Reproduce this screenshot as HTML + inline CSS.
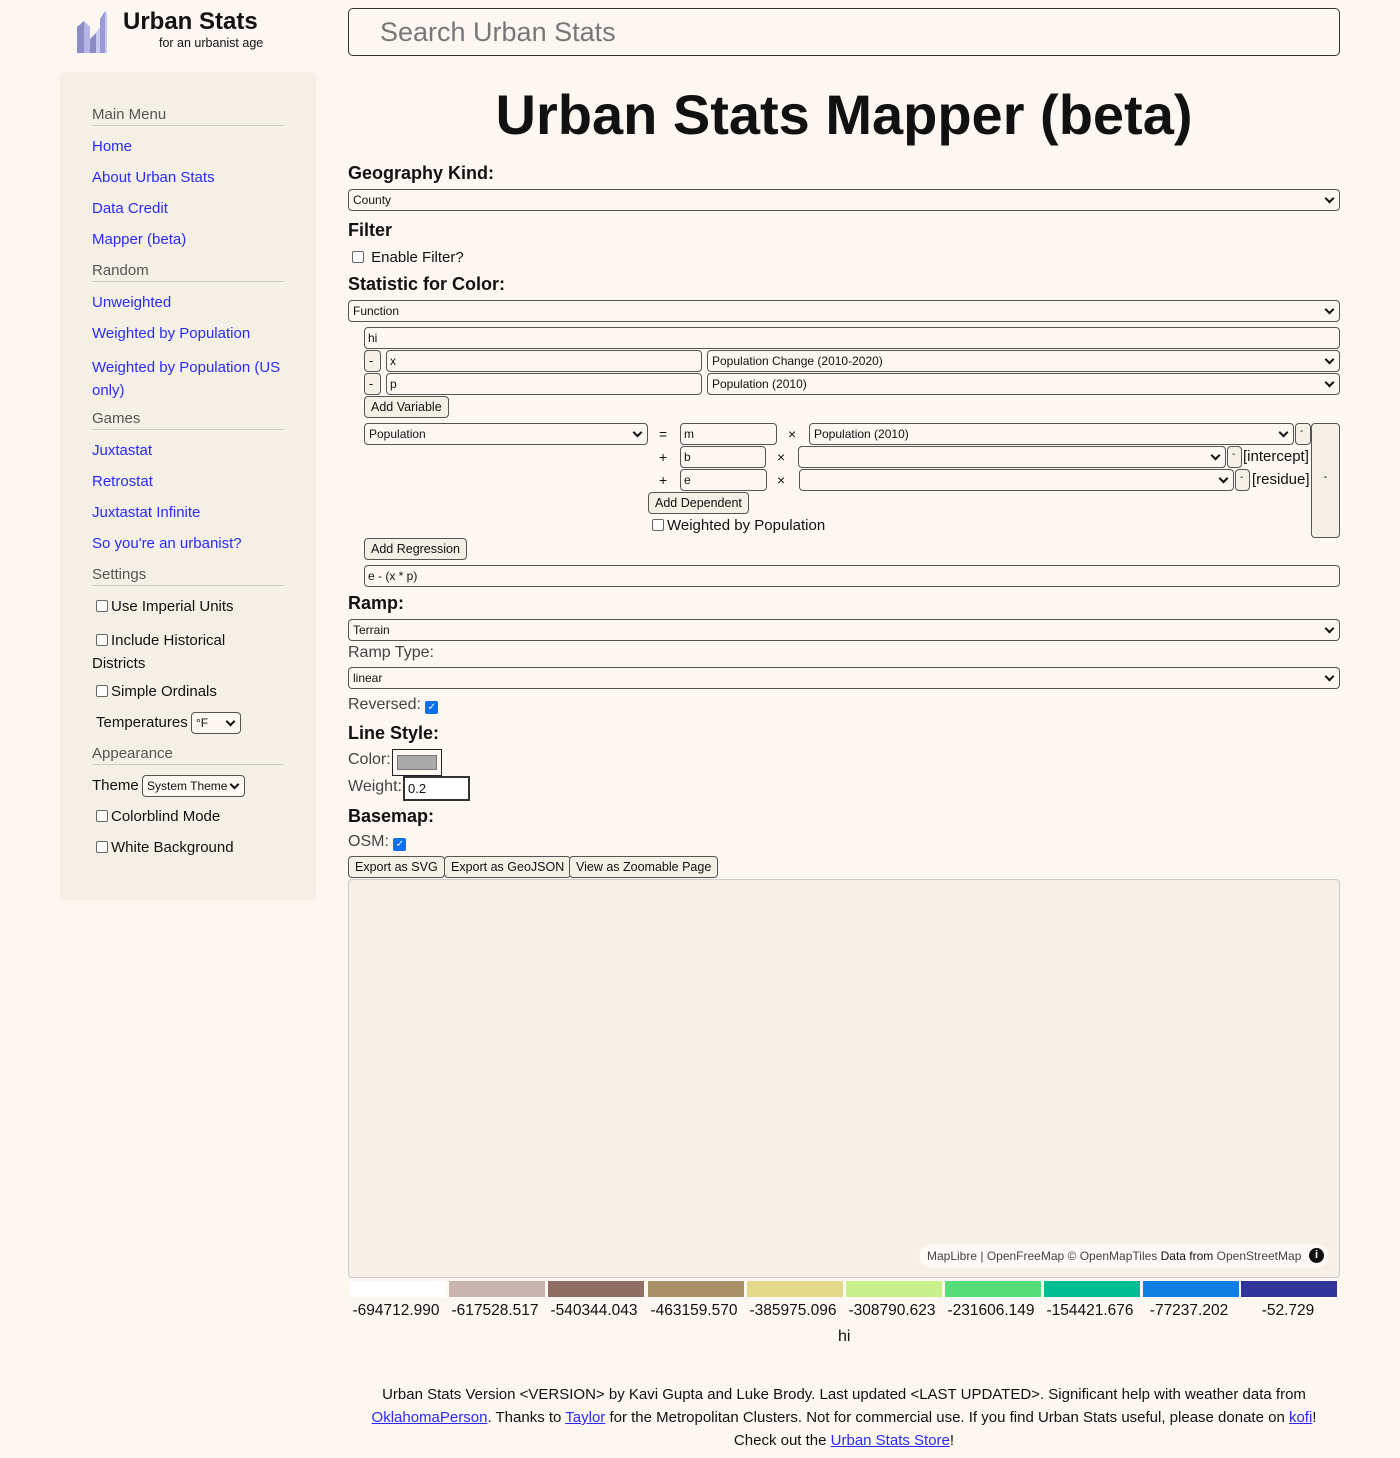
<!DOCTYPE html>
<html><head><meta charset="utf-8"><style>
*{box-sizing:border-box}
body{margin:0;width:1400px;height:1458px;background:#fdf7f1;font-family:"Liberation Sans",sans-serif;color:#111;position:relative;overflow:hidden}
.a{position:absolute;white-space:nowrap}
a,.lk{color:#2a2aff}
.side{position:absolute;left:60px;top:72px;width:256px;height:828px;background:#f5f0e6;border-radius:6px}
.hd{position:absolute;left:92px;width:192px;font-size:15px;color:#555;border-bottom:1px solid #ccc;padding-bottom:2px}
.sl{position:absolute;left:92px;font-size:15px;color:#2a2aff}
.st{position:absolute;left:96px;font-size:15px;color:#111}
.cb{display:inline-block;width:12px;height:12px;border:1px solid #666;border-radius:2px;background:#fff;vertical-align:-1px;margin-right:3px}
.sel{position:absolute;height:22px;border:1px solid #555;border-radius:4px;background:#fdf7f1;font-size:12px;padding:3px 4px;white-space:nowrap}
.sel:after{content:"";position:absolute;right:6px;top:5px;width:5px;height:5px;border-right:2px solid #111;border-bottom:2px solid #111;transform:rotate(45deg)}
.inp{position:absolute;height:22px;border:1px solid #555;border-radius:4px;background:#fdf7f1;font-size:12px;padding:3px 3px}
.btn{position:absolute;height:22px;border:1px solid #555;border-radius:4px;background:#f5f0e6;font-size:12.5px;padding:3px 6px;white-space:nowrap}
.h2{position:absolute;left:348px;font-size:18px;font-weight:bold}
.lb{position:absolute;left:348px;font-size:16px;color:#444}
.chk{display:inline-block;width:13px;height:13px;background:#0b6fe8;border-radius:2px;color:#fff;font-size:10px;line-height:13px;text-align:center;vertical-align:-1px}
.sw{position:absolute;top:1281px;height:16px;width:96px}
.lv{position:absolute;top:1302px;font-size:15.5px;width:100px;text-align:center}
</style></head><body>
<svg class="a" style="left:76px;top:9px" width="32" height="45" viewBox="0 0 32 45"><path d="M1 18 L8 12 L8 44 L1 44Z" fill="#8b8bc6"/><path d="M8 12 L14 18 L14 44 L8 44Z" fill="#b6b6e6"/><path d="M14 30 L20 24 L20 44 L14 44Z" fill="#8b8bc6"/><path d="M20 24 L24 18 L24 44 L20 44Z" fill="#c8c8f0"/><path d="M24 10 L29 2 L29 44 L24 44Z" fill="#9a9ad6"/><path d="M29 2 L31 4 L31 44 L29 44Z" fill="#c8c8f0"/></svg>
<div class="a" style="left:123px;top:8px;font-size:24px;font-weight:bold">Urban Stats</div>
<div class="a" style="left:159px;top:36px;font-size:12.5px">for an urbanist age</div>
<div class="a" style="left:348px;top:8px;width:992px;height:48px;border:1px solid #333;border-radius:5px;font-size:27px;color:#777;padding:8px 31px">Search Urban Stats</div>
<div class="side"></div>
<div class="hd" style="top:106px">Main Menu</div>
<div class="sl" style="top:138px">Home</div>
<div class="sl" style="top:169px">About Urban Stats</div>
<div class="sl" style="top:200px">Data Credit</div>
<div class="sl" style="top:231px">Mapper (beta)</div>
<div class="hd" style="top:262px">Random</div>
<div class="sl" style="top:294px">Unweighted</div>
<div class="sl" style="top:325px">Weighted by Population</div>
<div class="sl" style="top:356px;line-height:23px">Weighted by Population (US<br>only)</div>
<div class="hd" style="top:410px">Games</div>
<div class="sl" style="top:442px">Juxtastat</div>
<div class="sl" style="top:473px">Retrostat</div>
<div class="sl" style="top:504px">Juxtastat Infinite</div>
<div class="sl" style="top:535px">So you're an urbanist?</div>
<div class="hd" style="top:566px">Settings</div>
<div class="st" style="top:598px"><span class="cb"></span>Use Imperial Units</div>
<div class="st" style="top:629px;line-height:23px"><span class="cb"></span>Include Historical<br><span style="margin-left:-4px">Districts</span></div>
<div class="st" style="top:683px"><span class="cb"></span>Simple Ordinals</div>
<div class="st" style="top:714px">Temperatures</div>
<div class="sel" style="left:191px;top:712px;width:50px">°F</div>
<div class="hd" style="top:745px">Appearance</div>
<div class="st" style="left:92px;top:777px">Theme</div>
<div class="sel" style="left:142px;top:775px;width:103px">System Theme</div>
<div class="st" style="top:808px"><span class="cb"></span>Colorblind Mode</div>
<div class="st" style="top:839px"><span class="cb"></span>White Background</div>

<div class="a" style="left:348px;width:992px;top:82px;text-align:center;font-size:56px;font-weight:bold">Urban Stats Mapper (beta)</div>
<div class="h2" style="top:163px">Geography Kind:</div>
<div class="sel" style="left:348px;top:189px;width:992px">County</div>
<div class="h2" style="top:220px">Filter</div>
<div class="a" style="left:352px;top:249px;font-size:15px"><span class="cb"></span> Enable Filter?</div>
<div class="h2" style="top:274px">Statistic for Color:</div>
<div class="sel" style="left:348px;top:300px;width:992px">Function</div>
<div class="inp" style="left:364px;top:327px;width:976px">hi</div>
<div class="btn" style="left:364px;top:350px;width:17px;padding:3px 4px">-</div>
<div class="inp" style="left:386px;top:350px;width:316px">x</div>
<div class="sel" style="left:707px;top:350px;width:633px">Population Change (2010-2020)</div>
<div class="btn" style="left:364px;top:373px;width:17px;padding:3px 4px">-</div>
<div class="inp" style="left:386px;top:373px;width:316px">p</div>
<div class="sel" style="left:707px;top:373px;width:633px">Population (2010)</div>
<div class="btn" style="left:364px;top:396px">Add Variable</div>
<div class="sel" style="left:364px;top:423px;width:284px">Population</div>
<div class="a" style="left:659px;top:426px;font-size:14px">=</div>
<div class="inp" style="left:680px;top:423px;width:97px">m</div>
<div class="a" style="left:788px;top:426px;font-size:14px">×</div>
<div class="sel" style="left:809px;top:423px;width:485px">Population (2010)</div>
<div class="btn" style="left:1295px;top:423px;width:16px;padding:2px 4px;font-size:10px">-</div>
<div class="a" style="left:659px;top:449px;font-size:14px">+</div>
<div class="inp" style="left:680px;top:446px;width:86px">b</div>
<div class="a" style="left:777px;top:449px;font-size:14px">×</div>
<div class="sel" style="left:798px;top:446px;width:428px"></div>
<div class="btn" style="left:1227px;top:446px;width:15px;padding:2px 4px;font-size:10px">-</div>
<div class="a" style="left:1243px;top:448px;font-size:15px">[intercept]</div>
<div class="a" style="left:659px;top:472px;font-size:14px">+</div>
<div class="inp" style="left:680px;top:469px;width:87px">e</div>
<div class="a" style="left:777px;top:472px;font-size:14px">×</div>
<div class="sel" style="left:799px;top:469px;width:435px"></div>
<div class="btn" style="left:1235px;top:469px;width:15px;padding:2px 4px;font-size:10px">-</div>
<div class="a" style="left:1252px;top:471px;font-size:15px">[residue]</div>
<div class="btn" style="left:1311px;top:423px;width:29px;height:115px;padding:47px 0 0;text-align:center;font-size:11px">-</div>
<div class="btn" style="left:648px;top:492px">Add Dependent</div>
<div class="a" style="left:652px;top:517px;font-size:15px"><span class="cb"></span>Weighted by Population</div>
<div class="btn" style="left:364px;top:538px">Add Regression</div>
<div class="inp" style="left:364px;top:565px;width:976px">e - (x * p)</div>
<div class="h2" style="top:593px">Ramp:</div>
<div class="sel" style="left:348px;top:619px;width:992px">Terrain</div>
<div class="lb" style="top:644px">Ramp Type:</div>
<div class="sel" style="left:348px;top:667px;width:992px">linear</div>
<div class="lb" style="top:696px">Reversed: <span class="chk">✓</span></div>
<div class="h2" style="top:723px">Line Style:</div>
<div class="lb" style="top:751px">Color:</div>
<div class="a" style="left:392px;top:749px;width:50px;height:27px;border:1px solid #222;background:#fdf7f1"><div style="margin:5px 4px;height:15px;background:#aaa;border:1px solid #777"></div></div>
<div class="lb" style="top:778px">Weight:</div>
<div class="a" style="left:403px;top:776px;width:67px;height:25px;border:2px solid #333;background:#fff;font-size:13px;padding:3px 3px">0.2</div>
<div class="h2" style="top:806px">Basemap:</div>
<div class="lb" style="top:833px">OSM: <span class="chk">✓</span></div>
<div class="btn" style="left:348px;top:856px">Export as SVG</div>
<div class="btn" style="left:444px;top:856px">Export as GeoJSON</div>
<div class="btn" style="left:569px;top:856px">View as Zoomable Page</div>
<div class="a" style="left:348px;top:879px;width:992px;height:399px;background:#f6f0e7;border:1px solid #ccc;border-radius:4px"></div>
<div class="a" style="left:919px;top:1244px;width:410px;height:24px;background:#fdfaf6;border-radius:12px;font-size:12px;color:#444;padding:5px 8px">MapLibre | OpenFreeMap © OpenMapTiles <span style="color:#111">Data from</span> OpenStreetMap</div>
<div class="a" style="left:1309px;top:1248px;width:15px;height:15px;border-radius:50%;background:#111;color:#fff;font-size:11px;font-weight:bold;text-align:center;line-height:15px">i</div>
<div class="sw" style="left:350px;background:#fff"></div>
<div class="sw" style="left:449px;background:#c8b5b0"></div>
<div class="sw" style="left:548px;background:#8f6e64"></div>
<div class="sw" style="left:648px;background:#a99068"></div>
<div class="sw" style="left:747px;background:#e4d88a"></div>
<div class="sw" style="left:846px;background:#c9f18b"></div>
<div class="sw" style="left:945px;background:#56dd79"></div>
<div class="sw" style="left:1044px;background:#00be92"></div>
<div class="sw" style="left:1143px;background:#0e7fe1"></div>
<div class="sw" style="left:1241px;background:#33349a"></div>
<div class="lv" style="left:346px">-694712.990</div>
<div class="lv" style="left:445px">-617528.517</div>
<div class="lv" style="left:544px">-540344.043</div>
<div class="lv" style="left:644px">-463159.570</div>
<div class="lv" style="left:743px">-385975.096</div>
<div class="lv" style="left:842px">-308790.623</div>
<div class="lv" style="left:941px">-231606.149</div>
<div class="lv" style="left:1040px">-154421.676</div>
<div class="lv" style="left:1139px">-77237.202</div>
<div class="lv" style="left:1238px">-52.729</div>
<div class="a" style="left:838px;top:1328px;font-size:16px">hi</div>
<div class="a" style="left:348px;top:1383px;width:992px;text-align:center;white-space:normal;font-size:15px;line-height:23px">Urban Stats Version &lt;VERSION&gt; by Kavi Gupta and Luke Brody. Last updated &lt;LAST UPDATED&gt;. Significant help with weather data from <u class="lk">OklahomaPerson</u>. Thanks to <u class="lk">Taylor</u> for the Metropolitan Clusters. Not for commercial use. If you find Urban Stats useful, please donate on <u class="lk">kofi</u>!<br>Check out the <u class="lk">Urban Stats Store</u>!</div>
</body></html>
